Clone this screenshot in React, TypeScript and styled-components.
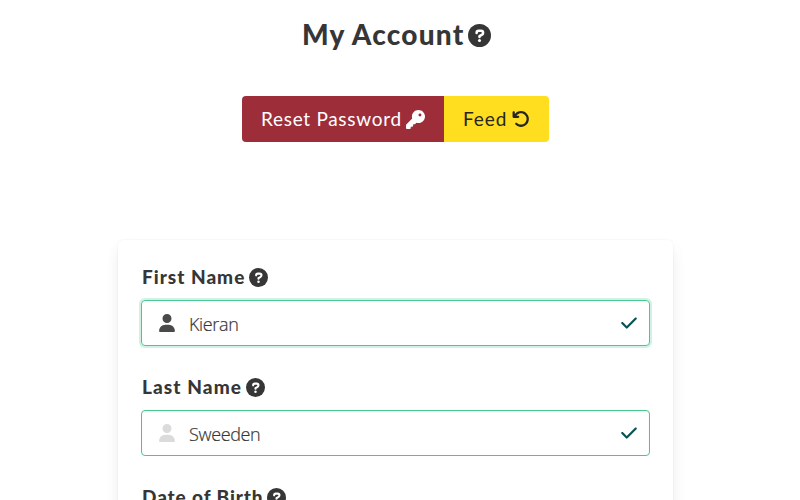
import React from "react";
import styled, { createGlobalStyle } from "styled-components";
import { FaKey, FaArrowRotateLeft, FaUser, FaCheck } from "react-icons/fa6";

const GlobalStyle = createGlobalStyle`
  *, *::before, *::after { box-sizing: border-box; }
  html, body { margin: 0; height: 100%; overflow: hidden; background: #fff; }
  body { font-family: Lato, "Open Sans", sans-serif; color: #363636; }
`;

const Page = styled.main`
  display: flex;
  flex-direction: column;
  width: 800px;
  height: 500px;
  overflow: hidden;
`;

const Title = styled.h1`
  display: flex;
  flex: none;
  align-items: center;
  gap: 4px;
  height: 36px;
  margin: 17px 0 0 302px;
  font-size: 28px;
  font-weight: 900;
  line-height: 34px;
`;

const Text = styled.span<{ $width: number; $spacing: number }>`
  flex: none;
  width: ${(p) => p.$width}px;
  margin-top: -2px;
  letter-spacing: ${(p) => p.$spacing}px;
  white-space: nowrap;
`;

const ButtonGroup = styled.div`
  display: flex;
  flex: none;
  width: 307px;
  height: 46px;
  margin: 43px 0 0 242px;
  border-radius: 4px;
  overflow: hidden;
`;

const Button = styled.button<{ $bg: string; $fg: string; $width: number }>`
  display: flex;
  align-items: center;
  gap: 5px;
  width: ${(p) => p.$width}px;
  height: 46px;
  padding: 0 0 0 19px;
  border: 0;
  background: ${(p) => p.$bg};
  color: ${(p) => p.$fg};
  font: 400 19px/27px Lato, sans-serif;
  text-align: left;
`;

const Card = styled.form`
  flex: none;
  width: 555px;
  height: 400px;
  margin: 98px 0 0 118px;
  padding: 24px 23px;
  border-radius: 6px;
  background: #fff;
  box-shadow: 0 8px 16px -2px rgba(10, 10, 10, 0.1), 0 0 0 1px rgba(10, 10, 10, 0.02);
`;

const Field = styled.div`
  height: 110px;
`;

const Label = styled.label`
  display: flex;
  align-items: center;
  gap: 4px;
  height: 27px;
  margin: 0 0 9px 1px;
  font-size: 19px;
  font-weight: 900;
  line-height: 27px;
`;

const Control = styled.div<{ $focused?: boolean }>`
  display: flex;
  align-items: center;
  height: 46px;
  padding: 0 11px 0 16px;
  border: 1px solid #48c78e;
  border-radius: 4px;
  box-shadow: ${(p) => (p.$focused ? "0 0 0 2px rgba(72, 199, 142, 0.25)" : "inset 0 1px 2px rgba(10, 10, 10, 0.05)")};

  > svg:first-child {
    color: ${(p) => (p.$focused ? "#4a4a4a" : "#dbdbdb")};
    margin: -1px 13px 0 0;
  }
  > svg:last-child {
    margin: -1px 0 0 auto;
    color: #095352;
  }
`;

const Value = styled.span<{ $width: number; $spacing: number }>`
  width: ${(p) => p.$width}px;
  margin-top: 2px;
  letter-spacing: ${(p) => p.$spacing}px;
  color: #363636;
  font: 350 18px/27px "Open Sans", "Noto Sans", sans-serif;
  -webkit-text-stroke: 0.2px #363636;
  white-space: nowrap;
`;

const HelpIcon = ({ size }: { size: number }) => (
  <svg width={size} height={size} viewBox="0 0 512 512" aria-hidden="true">
    <circle cx="256" cy="256" r="256" fill="#363636" />
    <path
      d="M192 198C192 172 212 152 238 152H289C316 152 336 172 336 198C336 214 327 229 313 237L256 271V289"
      fill="none"
      stroke="#fff"
      strokeWidth="56"
      strokeLinecap="round"
      strokeLinejoin="round"
    />
    <circle cx="256" cy="368" r="34" fill="#fff" />
  </svg>
);

export default function App() {
  return (
    <>
      <GlobalStyle />
      <Page>
        <Title>
          <Text $width={162} $spacing={1.2}>My Account</Text>
          <HelpIcon size={23} />
        </Title>
        <ButtonGroup>
          <Button $bg="#9e2d3a" $fg="#fff" $width={202}>
            <Text $width={140} $spacing={0.7}>Reset Password</Text>
            <FaKey size={19} />
          </Button>
          <Button $bg="#ffdd1f" $fg="#262521" $width={105}>
            <Text $width={44} $spacing={0.9}>Feed</Text>
            <FaArrowRotateLeft size={18} />
          </Button>
        </ButtonGroup>
        <Card>
          <Field>
            <Label>
              <Text $width={103} $spacing={1}>First Name</Text>
              <HelpIcon size={19} />
            </Label>
            <Control $focused>
              <FaUser size={18} />
              <Value $width={51} $spacing={-0.35}>Kieran</Value>
              <FaCheck size={18} />
            </Control>
          </Field>
          <Field>
            <Label>
              <Text $width={100} $spacing={1.1}>Last Name</Text>
              <HelpIcon size={19} />
            </Label>
            <Control>
              <FaUser size={18} />
              <Value $width={73} $spacing={-0.35}>Sweeden</Value>
              <FaCheck size={18} />
            </Control>
          </Field>
          <Field>
            <Label>
              <Text $width={121} $spacing={0.9}>Date of Birth</Text>
              <HelpIcon size={19} />
            </Label>
            <Control />
          </Field>
        </Card>
      </Page>
    </>
  );
}
